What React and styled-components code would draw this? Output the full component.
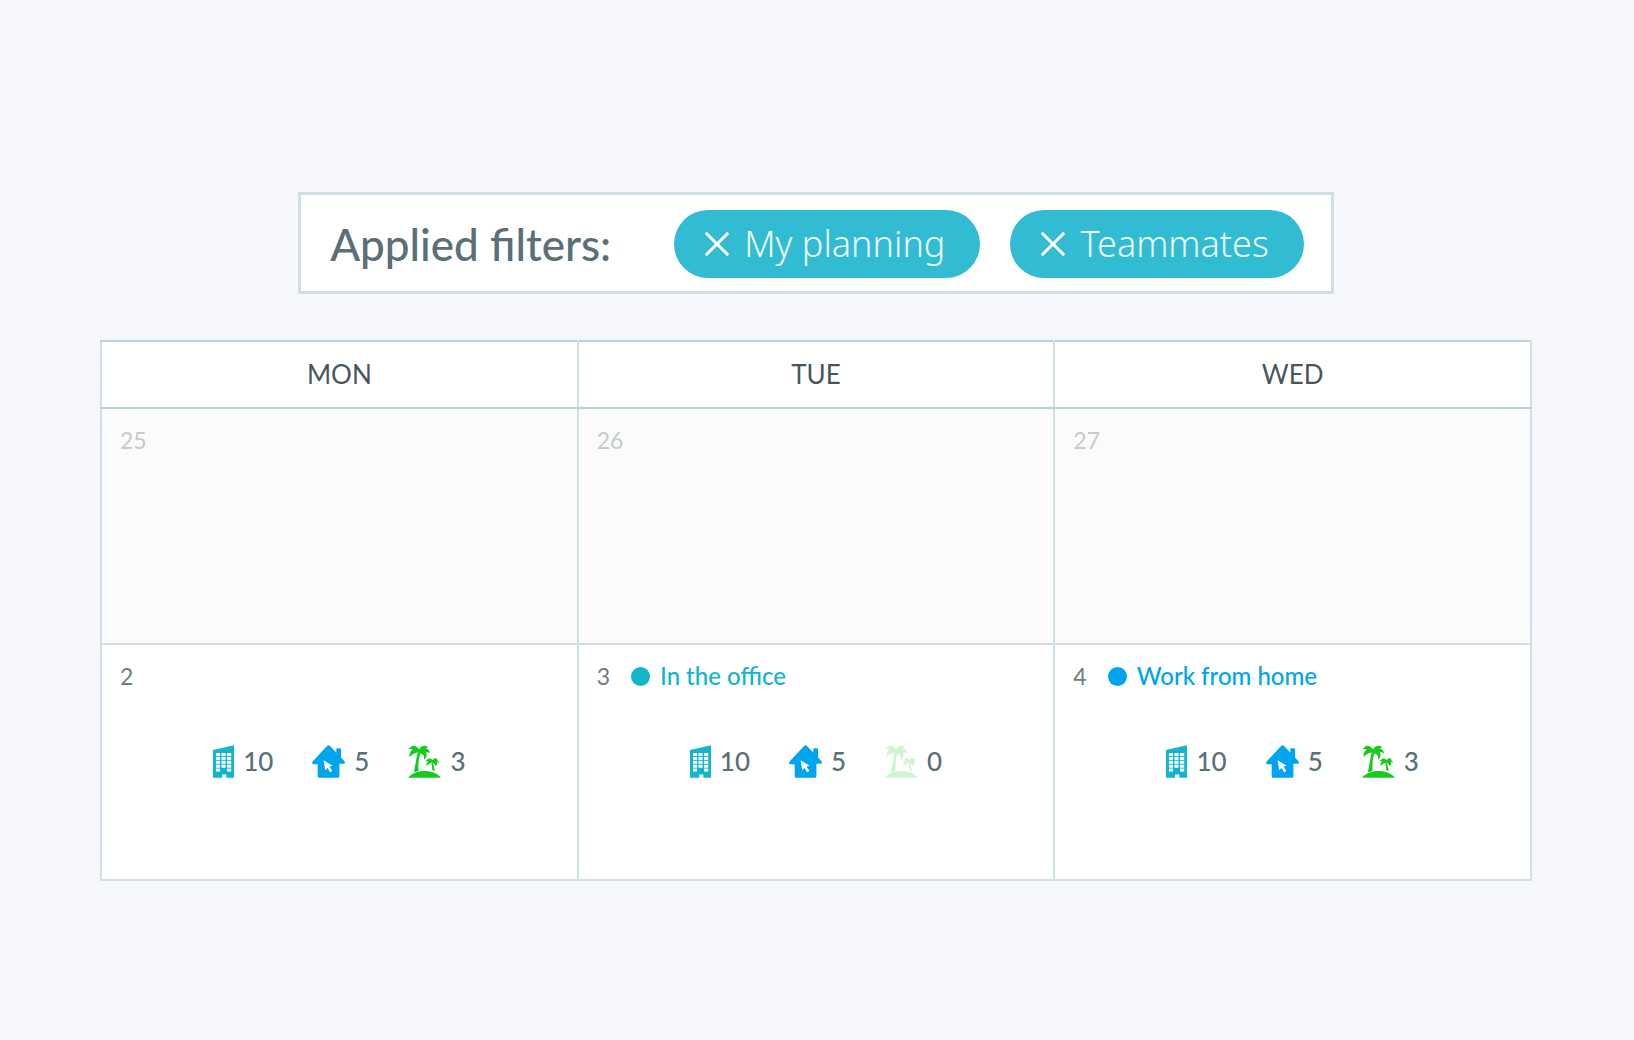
import React from 'react'
import styled, { createGlobalStyle, ThemeProvider } from 'styled-components'

const theme = {
  page: '#f5f7fb',
  surface: '#ffffff',
  muted: '#fbfbfb',
  border: '#d1e0e4',
  border_strong: '#b9d2da',
  text_primary: '#5a7077',
  text_heading: '#48565b',
  text_day: '#6d7c81',
  text_disabled: '#c6cbcd',
  pill: '#31bcd3',
  office: '#12b5cb',
  home: '#00a4ef',
  holiday: '#15cc1e',
}

const GlobalStyle = createGlobalStyle`
  * {
    box-sizing: border-box;
  }
  body {
    margin: 0;
    background-color: ${theme.page};
    font-family: Lato, "Liberation Sans", sans-serif;
  }
`;

const Page = styled.main`
  display: flex;
  flex-direction: column;
  align-items: center;
  gap: 46px;
  min-height: 100vh;
  padding: 192px 102px 100px 100px;
  @media screen and (max-width: 960px) {
    padding: 32px 16px;
  }
`;

const FilterBar = styled.section`
  display: flex;
  flex-wrap: wrap;
  align-items: center;
  gap: 16px 63px;
  padding: 15px 27px 13px 29px;
  background-color: ${({ theme }) => theme.surface};
  border: 3px solid ${({ theme }) => theme.border};
`;

const FilterTitle = styled.h2`
  margin: 0;
  font-size: 44px;
  font-weight: 500;
  line-height: 52px;
  color: ${({ theme }) => theme.text_primary};
`;

const FilterList = styled.div`
  display: flex;
  flex-wrap: wrap;
  gap: 16px 30px;
`;

const Pill = styled.button`
  display: flex;
  align-items: center;
  gap: 15px;
  height: 68px;
  padding: 0 35px 0 31px;
  border: none;
  border-radius: 34px;
  background-color: ${({ theme }) => theme.pill};
  color: #effafc;
  font-family: "Noto Sans", sans-serif;
  font-size: 36px;
  font-weight: 300;
  line-height: 48px;
  cursor: pointer;
`;

const Calendar = styled.table`
  width: 100%;
  table-layout: fixed;
  border-collapse: collapse;
  background-color: ${({ theme }) => theme.surface};
`;

const DayName = styled.th`
  height: 67px;
  padding: 0 0 2px;
  border: 2px solid ${({ theme }) => theme.border};
  border-top-color: ${({ theme }) => theme.border_strong};
  border-bottom-color: ${({ theme }) => theme.border_strong};
  color: ${({ theme }) => theme.text_heading};
  font-size: 26px;
  font-weight: 400;
  line-height: 32px;
`;

const DayCell = styled.td`
  height: 236px;
  padding: 17px 18px;
  border: 2px solid ${({ theme }) => theme.border};
  background-color: ${({ theme, $outside }) => ($outside ? theme.muted : theme.surface)};
  color: ${({ theme, $outside }) => ($outside ? theme.text_disabled : theme.text_day)};
  vertical-align: top;
`;

const DayHeader = styled.div`
  display: flex;
  align-items: center;
  gap: 21px;
  font-size: 23px;
  line-height: 28px;
`;

const Status = styled.span`
  display: flex;
  align-items: center;
  gap: 10px;
  color: ${({ theme, $kind }) => theme[$kind]};
  font-size: 24px;
  font-weight: 500;
`;

const Dot = styled.span`
  width: 19px;
  height: 19px;
  border-radius: 50%;
  background-color: currentColor;
`;

const Stats = styled.div`
  display: flex;
  justify-content: center;
  gap: 39px;
  margin-top: 55px;
`;

const Stat = styled.span`
  display: flex;
  align-items: center;
  gap: 9px;
  color: ${({ theme }) => theme.text_primary};
  font-size: 26px;
  font-weight: 500;
  line-height: 33px;
  svg {
    flex: none;
    color: ${({ theme, $kind }) => theme[$kind]};
    opacity: ${({ $empty }) => ($empty ? 0.2 : 1)};
  }
`;

const CrossIcon = () => (
  <svg width="24" height="24" viewBox="0 0 24 24" fill="none" stroke="#fff" strokeWidth="3" strokeLinecap="round" aria-hidden="true">
    <path d="M1.7 1.7 22.3 22.3M22.3 1.7 1.7 22.3" />
  </svg>
)

const OfficeIcon = () => (
  <svg width="21" height="33" viewBox="0 0 21 33" fill="currentColor" aria-hidden="true">
    <path d="M0 5 21 .2V32.7H13.3V29.4H9.2V32.7H0Z" />
    <g fill="#fff">
      {[8, 11.9, 15.8, 19.7, 23.6].map((y, i) => (
        <g key={y}>
          <rect x="3" y={y} width="4" height="3" />
          {i < 4 && <rect x="8.4" y={y} width="4.2" height="3" />}
          <rect x="14" y={y} width="4.2" height="3" />
        </g>
      ))}
    </g>
  </svg>
)

const HomeIcon = () => (
  <svg width="33" height="33" viewBox="0 0 33 33" fill="currentColor" aria-hidden="true">
    <path d="M15.3.7Q16.5-.4 17.7.7L24.3 7.4V4.4Q24.3 3.3 25.4 3.3H28Q29.1 3.3 29.1 4.4V12.4L32.6 16.6Q33.4 17.9 32.3 18.8H27.4V31.2Q27.4 32.7 25.9 32.7H7.2Q5.7 32.7 5.7 31.2V19.2H.8Q-.4 18 .6 16.6Z" />
    <path fill="#fff" d="M11.6 15.2 20.6 20.7 17.6 21.6 20.3 26 18 27.3 15.6 22.9 13.2 25.2Z" />
  </svg>
)

const HolidayIcon = () => (
  <svg width="33" height="33" viewBox="0 0 33 33" fill="currentColor" aria-hidden="true">
    <path d="M0 32.8C3.4 28.6 9.4 26 16.6 26S29.7 28.6 33 32.8Z" />
    <path d="M9.7 7.5 12.6 7.8C10.6 13.5 10.1 19.5 10.6 26.3L5.8 27.1C7.5 21 8 13.5 9.7 7.5Z" />
    <path d="M10.9 4.3C8.8.5 4.4-.7 2.3 2.4 1.4 2.6.9 3.3.5 4.3 2 3.7 3.1 3.9 4.5 4.7 2.4 6.1 1.2 8.7 1.6 12.3 4.1 9.5 6.4 8.2 9.7 7.6 11.4 8.1 14 8.5 15.7 10.6 16.2 11.7 16 13.2 15.9 14.8 18.5 12.8 19.2 10.1 18.1 7.3 19.6 7.1 20.8 7.5 22.1 8.6 22 5.7 20.2 3.9 17.7 3.5 18.6 2.8 19.4 2.7 20.3 2.8 17.6-.4 13.1.5 10.9 4.3Z" />
    <path d="M23.3 18.2 25.2 18.1C25.6 20.8 26 23.2 27 25.9L24.1 25.1C24.2 22.5 24 20.4 23.3 18.2Z" />
    <path d="M24.6 15.2C23 12.8 19.8 12.9 18.8 15 18.1 15.2 17.7 15.7 17.4 16.4 18.4 16.1 19.2 16.2 20 16.5 18.6 17.8 18.2 19.6 18.7 21.2 20 19.4 21.4 18.3 23.6 17.7 25.4 17.8 26.9 18.8 27.5 21.1 29.1 19.9 29.4 18.5 28.9 17 29.6 16.9 30.3 17.1 31 17.7 30.7 16 29.6 15.1 28.4 15 29 14.6 29.5 14.5 30 14.6 28.4 12.6 25.8 12.8 24.6 15.2Z" />
  </svg>
)

const icons = {
  office: OfficeIcon,
  home: HomeIcon,
  holiday: HolidayIcon,
}

const filters = ['My planning', 'Teammates']

const dayNames = ['MON', 'TUE', 'WED']

const weeks = [
  [
    { day: 25, outside: true },
    { day: 26, outside: true },
    { day: 27, outside: true },
  ],
  [
    { day: 2, stats: { office: 10, home: 5, holiday: 3 } },
    { day: 3, status: { kind: 'office', label: 'In the office' }, stats: { office: 10, home: 5, holiday: 0 } },
    { day: 4, status: { kind: 'home', label: 'Work from home' }, stats: { office: 10, home: 5, holiday: 3 } },
  ],
]

const Day = ({ day, outside, status, stats }) => (
  <DayCell $outside={outside}>
    <DayHeader>
      {day}
      {status && (
        <Status $kind={status.kind}>
          <Dot />
          {status.label}
        </Status>
      )}
    </DayHeader>
    {stats && (
      <Stats>
        {Object.entries(stats).map(([kind, count]) => {
          const Icon = icons[kind]
          return (
            <Stat key={kind} $kind={kind} $empty={count === 0}>
              <Icon />
              {count}
            </Stat>
          )
        })}
      </Stats>
    )}
  </DayCell>
)

const App = () => {
  return (
    <ThemeProvider theme={theme}>
      <GlobalStyle />
      <Page>
        <FilterBar>
          <FilterTitle>Applied filters:</FilterTitle>
          <FilterList>
            {filters.map((name) => (
              <Pill key={name} type="button">
                <CrossIcon />
                {name}
              </Pill>
            ))}
          </FilterList>
        </FilterBar>
        <Calendar>
          <thead>
            <tr>
              {dayNames.map((name) => (
                <DayName key={name} scope="col">{name}</DayName>
              ))}
            </tr>
          </thead>
          <tbody>
            {weeks.map((week) => (
              <tr key={week[0].day}>
                {week.map((item) => (
                  <Day key={item.day} {...item} />
                ))}
              </tr>
            ))}
          </tbody>
        </Calendar>
      </Page>
    </ThemeProvider>
  )
}

export default App
